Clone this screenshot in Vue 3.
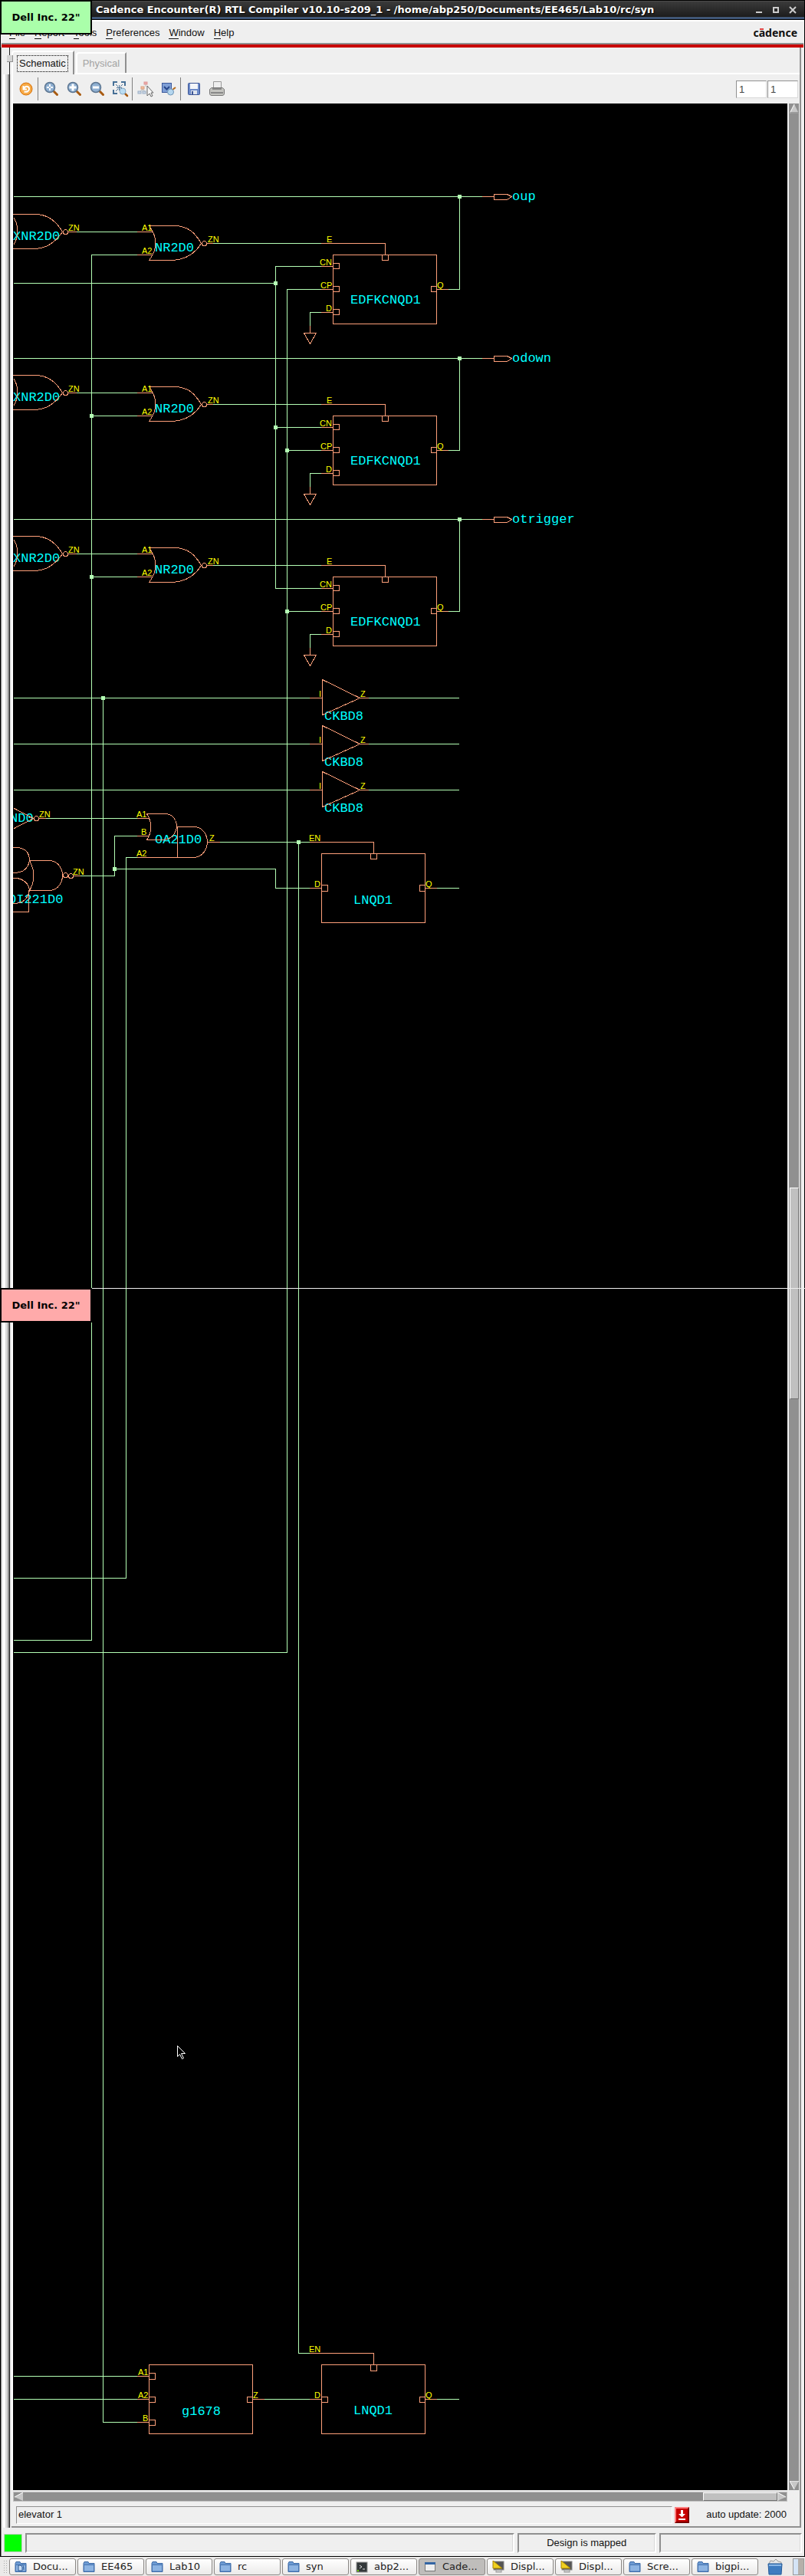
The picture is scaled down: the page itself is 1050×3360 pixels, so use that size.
<script setup>
import { ref } from 'vue'

const menus = ['File', 'Report', 'Tools', 'Preferences', 'Window', 'Help']
const zoomX = ref('1')
const zoomY = ref('1')

const tools = [
  { name: 'Redraw', icon: 'undo' },
  { sep: true },
  { name: 'Zoom area', icon: 'area' },
  { name: 'Zoom in', icon: 'in' },
  { name: 'Zoom out', icon: 'out' },
  { name: 'Zoom fit', icon: 'fit' },
  { sep: true },
  { name: 'Hierarchy', icon: 'tree' },
  { name: 'Inspect', icon: 'inspect' },
  { sep: true },
  { name: 'Save', icon: 'save' },
  { name: 'Print', icon: 'print' },
]

const tasks = [
  { label: 'Docu...', icon: 'docs' },
  { label: 'EE465', icon: 'folder' },
  { label: 'Lab10', icon: 'folder' },
  { label: 'rc', icon: 'folder' },
  { label: 'syn', icon: 'folder' },
  { label: 'abp2...', icon: 'term' },
  { label: 'Cade...', icon: 'app', active: true },
  { label: 'Displ...', icon: 'display' },
  { label: 'Displ...', icon: 'display' },
  { label: 'Scre...', icon: 'folder' },
  { label: 'bigpi...', icon: 'folder' },
]

// One register row per output port; dy shifts the row, net is its feedback wire.
const rows = [
  { dy: 0, net: 256, port: 'oup' },
  { dy: 210, net: 467, port: 'odown' },
  { dy: 420, net: 677, port: 'otrigger' },
]
const pins = [347, 377, 407]
const buffers = [910, 970, 1030]

const wires = [
  'M359 767V347', 'M18 369H359', 'M119 2139V332', 'M374 377V2155H18', 'M119 2139H18',
  'M359 557H419', 'M359 767H419', 'M374 587H419', 'M374 797H419', 'M359 347H419', 'M374 377H419',
  'M134 910V3159H179', 'M164 2058V1118H179', 'M164 2058H18',
  'M59 1067H179', 'M104 1142H149V1090H179', 'M149 1133H359V1158H404',
  'M286 1098H404', 'M389 1098V3069H404', 'M569 1158H598',
  'M18 3099H179', 'M18 3129H179', 'M344 3129H404', 'M569 3129H598',
]
const nodes = [
  [359, 369], [359, 557], [119, 542], [119, 752], [374, 587], [374, 797],
  [599, 256], [599, 467], [599, 677], [134, 910], [389, 1098], [149, 1133],
]
const pinLabels = [
  ['ZN', 51, 1066], ['A1', 178, 1066], ['B', 184, 1089], ['A2', 178, 1117], ['Z', 273, 1097],
  ['ZN', 95, 1141], ['EN', 403, 1097], ['D', 410, 1157], ['Q', 555, 1157],
  ['A1', 180, 3098], ['A2', 180, 3128], ['B', 186, 3158], ['Z', 330, 3128],
  ['EN', 403, 3068], ['D', 410, 3128], ['Q', 555, 3128],
]
const cellLabels = [
  ['ND0', 13, 1072], ['OA21D0', 202, 1100], ['OI221D0', 11, 1178],
  ['LNQD1', 461, 1179], ['g1678', 237, 3150], ['LNQD1', 461, 3149],
]
</script>

<template>
  <div class="screen">
    <header class="titlebar">
      <h1>Cadence Encounter(R) RTL Compiler v10.10-s209_1 - /home/abp250/Documents/EE465/Lab10/rc/syn</h1>
      <div class="winbtns">
        <button aria-label="Minimize"><svg width="10" height="10"><path d="M1 8H9" stroke="#ccc" stroke-width="2" /></svg></button>
        <button aria-label="Maximize"><svg width="10" height="10"><path d="M2 2H8V8H2Z" fill="none" stroke="#ccc" stroke-width="2" /></svg></button>
        <button aria-label="Close"><svg width="10" height="10"><path d="M1 1L9 9M9 1L1 9" stroke="#ccc" stroke-width="2" /></svg></button>
      </div>
    </header>

    <div class="window">
      <nav class="menubar">
        <a v-for="m in menus" :key="m" href="#"><span class="key">{{ m[0] }}</span>{{ m.slice(1) }}</a>
        <span class="logo">c<span class="bar">a</span>dence</span>
      </nav>

      <div class="body">
        <div class="sash"><div class="sash-top"><i class="handle"></i></div></div>
        <main class="pane">
          <div class="tabs">
            <button class="tab on"><span>Schematic</span></button>
            <button class="tab" disabled><span>Physical</span></button>
          </div>

          <div class="toolbar">
            <template v-for="(t, i) in tools" :key="i">
              <i v-if="t.sep" class="sep"></i>
              <button v-else class="tool" :aria-label="t.name">
                <svg width="22" height="22" viewBox="0 0 22 22">
                  <template v-if="t.icon === 'undo'">
                    <circle cx="11" cy="11" r="8" fill="#f7a945" stroke="#d8740e" />
                    <path d="M7.500 7V11.500H12M8 11C10 6 15 7.500 15 11C15 14 12 15.500 8.500 14.500" fill="none" stroke="#fff" stroke-width="2" />
                  </template>
                  <template v-else-if="t.icon === 'area' || t.icon === 'in' || t.icon === 'out'">
                    <path d="M13 13L18.500 18.500" stroke="#a85a10" stroke-width="3" stroke-linecap="round" />
                    <circle cx="9" cy="9" r="6.500" fill="#8fb0d2" stroke="#5c7590" stroke-width="1.500" />
                    <path v-if="t.icon === 'out'" d="M5 9H13" stroke="#fff" stroke-width="3" />
                    <path v-else-if="t.icon === 'in'" d="M4.500 9H13.500M9 4.500V13.500" stroke="#fff" stroke-width="3" />
                    <path v-else d="M5 9H13M9 5V13" stroke="#fff" stroke-width="2" stroke-dasharray="3 2" />
                  </template>
                  <template v-else-if="t.icon === 'fit'">
                    <path d="M2 7V2H7M12 2H17V7M2 12V17H7" fill="none" stroke="#466f96" stroke-width="2" />
                    <path d="M5 5L8 8M14 5L11 8M5 14L8 11M9.500 6V13M6 9.500H13" stroke="#466f96" />
                    <path d="M16 16L20 20" stroke="#a85a10" stroke-width="2.500" stroke-linecap="round" />
                    <circle cx="14" cy="14" r="4" fill="#b9dcf2" stroke="#88a9c4" />
                  </template>
                  <template v-else-if="t.icon === 'tree'">
                    <path d="M11 5V8M7 10V14M7 11L4 14M7 11L10 14" stroke="#bbb" fill="none" />
                    <rect x="9" y="2" width="4" height="3" fill="#eda6a6" stroke="#d99" />
                    <rect x="5" y="8" width="4" height="3" fill="#f2bfa0" stroke="#dba080" />
                    <rect x="1" y="14" width="4" height="3" fill="#c9d6e6" stroke="#9db0c5" />
                    <rect x="7" y="14" width="4" height="3" fill="#c9d6e6" stroke="#9db0c5" />
                    <path d="M13 7V20L16 17L18 21L20 20L18 16H21Z" fill="#f6f6f6" stroke="#666" />
                  </template>
                  <template v-else-if="t.icon === 'inspect'">
                    <rect x="2.500" y="3.500" width="12" height="12" fill="#7f9fd6" stroke="#3d5a9c" />
                    <path d="M5 8L8.500 11.500L12 8" fill="none" stroke="#27478b" stroke-width="2" />
                    <path d="M16 12L20 9" stroke="#b56a1a" stroke-width="2" />
                    <circle cx="13.500" cy="15" r="4" fill="#b4d6ef" stroke="#6f94b6" />
                  </template>
                  <template v-else-if="t.icon === 'save'">
                    <rect x="3.500" y="3.500" width="15" height="15" rx="1" fill="#6d8bc9" stroke="#3d5696" />
                    <rect x="6" y="4" width="10" height="7" fill="#f4f6fa" />
                    <rect x="7" y="13" width="8" height="5" fill="#dfe4ee" />
                    <rect x="8" y="14" width="2" height="4" fill="#3d5696" />
                  </template>
                  <template v-else>
                    <path d="M6.500 11V1.500H16.500V11" fill="#eee" stroke="#999" />
                    <path d="M1.500 11.500L4 9.500H18L20.500 11.500V17.500Q20 19.500 18 19.500H4Q2 19.500 1.500 17.500Z" fill="#c4c4c0" stroke="#777" />
                    <path d="M5 11H17M3 16H19" stroke="#888" stroke-width="2" />
                  </template>
                </svg>
              </button>
            </template>
            <div class="levels">
              <input v-model="zoomX" aria-label="From level" />
              <input v-model="zoomY" aria-label="To level" />
            </div>
          </div>

          <div class="view">
            <svg class="schematic" width="100%" height="3113">
              <g transform="translate(-17 -135)">
                <g class="cell-text">
                  <g v-for="r in rows" :key="r.port">
                    <text x="17" :y="313 + r.dy">XNR2D0</text>
                    <text x="202" :y="328 + r.dy">NR2D0</text>
                    <text x="457" :y="396 + r.dy">EDFKCNQD1</text>
                    <text x="668" :y="r.net + 5">{{ r.port }}</text>
                  </g>
                  <text v-for="y in buffers" :key="y" x="423" :y="y + 29">CKBD8</text>
                  <text v-for="(l, i) in cellLabels" :key="i" :x="l[1]" :y="l[2]">{{ l[0] }}</text>
                </g>
              </g>
              <g transform="translate(-16.500 -134.500)">
                <g class="wire">
                  <path v-for="d in wires" :key="d" :d="d" />
                  <g v-for="r in rows" :key="r.port">
                    <path :d="`M18 ${r.net}H629M599 ${r.net}V${377 + r.dy}H584`" />
                    <path :d="`M99 ${302 + r.dy}H179M119 ${332 + r.dy}H179M277 ${317 + r.dy}H419M419 ${407 + r.dy}H404V${425 + r.dy}`" />
                  </g>
                  <path v-for="y in buffers" :key="y" :d="`M18 ${y}H404M480 ${y}H598`" />
                </g>
                <g class="shape">
                  <g v-for="r in rows" :key="r.port">
                    <path :d="`M629 ${r.net}H644M644 ${r.net - 3}H661L667 ${r.net}L661 ${r.net + 4}H644Z`" />
                    <g :transform="`translate(0 ${r.dy})`">
                      <path d="M17 279H48C62 280 73 288 81 302C71 316 60 324 43 324H17M18 284Q27 301 18 318" />
                      <circle cx="85" cy="302" r="3" />
                      <path d="M89 302H99M179 302H199M179 332H198" />
                      <path d="M194 294H229C245 295 254 303 262 317C254 330 243 338 225 339H194Q211 317 194 294" />
                      <circle cx="266" cy="317" r="3" />
                      <path d="M270 317H277M419 317H502V332M434 332H569V422H434ZM498 332V339H506V332" />
                      <path v-for="p in pins" :key="p" :d="`M419 ${p}H434M434 ${p - 4}H442V${p + 3}H434`" />
                      <path d="M569 373H562V380H569M569 377H584M404 425V434M396 434H412L404 448Z" />
                    </g>
                  </g>
                  <path v-for="y in buffers" :key="y" :d="`M404 ${y}H420M420 ${y - 24}V${y + 22}L469 ${y}ZM469 ${y}H480`" />
                  <path d="M18 1054L43 1067L18 1080M51 1067H59M179 1067H194" />
                  <circle cx="47" cy="1067" r="3" />
                  <path d="M191 1061H217C226 1063 230 1070 230 1078C229 1087 223 1094 213 1095H191Q202 1078 191 1061M179 1090H194" />
                  <path d="M231 1078H255C275 1082 275 1114 254 1118H179M231 1078V1118M270 1098H286" />
                  <path d="M38 1122H66C86 1126 86 1157 66 1161H38Q49 1142 38 1122" />
                  <path d="M17 1105H24C34 1107 38 1114 38 1122C36 1132 31 1138 17 1138M17 1145H22C32 1147 37 1153 38 1161C36 1172 30 1178 17 1178M37 1161V1189H17" />
                  <circle cx="85" cy="1141" r="3" />
                  <circle cx="92" cy="1142" r="3" />
                  <path d="M95 1142H104" />
                  <path d="M404 1098H487V1113M404 1158H419M554 1158H569M419 1113H554V1203H419ZM483 1113V1120H491V1113M419 1154H427V1162H419M554 1154H547V1162H554" />
                  <path d="M404 3069H487V3084M404 3129H419M554 3129H569M419 3084H554V3174H419ZM483 3084V3092H491V3084M419 3126H427V3133H419M554 3126H547V3133H554" />
                  <path d="M194 3084H329V3174H194ZM179 3099H194M179 3129H194M179 3159H194M194 3095H202V3103H194M194 3126H202V3133H194M194 3156H202V3163H194M329 3126H322V3133H329M329 3129H344" />
                </g>
                <path class="cursor" d="M231 2668V2682L234 2679L237 2685L239 2684L236 2678H241Z" />
              </g>
              <g transform="translate(-17 -135)">
                <rect v-for="n in nodes" :key="n.join()" class="node" :x="n[0] - 2" :y="n[1] - 2" width="5" height="5" />
                <g class="pin-text">
                  <g v-for="r in rows" :key="r.port" :transform="`translate(0 ${r.dy})`">
                    <text x="89" y="301">ZN</text>
                    <text x="185" y="301">A1</text>
                    <text x="185" y="331">A2</text>
                    <text x="271" y="316">ZN</text>
                    <text x="426" y="316">E</text>
                    <text x="417" y="346">CN</text>
                    <text x="418" y="376">CP</text>
                    <text x="425" y="406">D</text>
                    <text x="570" y="376">Q</text>
                  </g>
                  <g v-for="y in buffers" :key="y">
                    <text x="416" :y="y - 1">I</text>
                    <text x="470" :y="y - 1">Z</text>
                  </g>
                  <text v-for="(l, i) in pinLabels" :key="i" :x="l[1]" :y="l[2]">{{ l[0] }}</text>
                </g>
              </g>
            </svg>
            <div class="vscroll">
              <svg width="12" height="13"><path d="M0 13L6 1L12 13Z" fill="#c8c8c8" /><path d="M0 13L6 1" stroke="#fff" /><path d="M0 12H12" stroke="#707070" /></svg>
              <i class="before"></i>
              <i class="thumb"></i>
              <i class="after"></i>
              <svg width="12" height="12"><path d="M0 0L6 11L12 0Z" fill="#c8c8c8" /><path d="M6 11L0 0H12" fill="none" stroke="#fff" /></svg>
            </div>
          </div>

          <div class="hscroll">
            <svg width="12" height="11"><path d="M12 0L1 6L12 11Z" fill="#c8c8c8" /><path d="M1 6L12 0" stroke="#fff" /></svg>
            <i class="rail"></i>
            <i class="thumb"></i>
            <svg width="12" height="11"><path d="M0 0L11 6L0 11Z" fill="#c8c8c8" /><path d="M0 11V0L11 6" fill="none" stroke="#fff" /></svg>
          </div>

          <div class="info">
            <div class="design">elevator 1</div>
            <button class="load" aria-label="Load update">
              <svg width="13" height="15"><path d="M5 1H8V6H11L7 10H6L2 6H5ZM2 12H11V14H2Z" fill="#fff" /></svg>
            </button>
            <span class="auto">auto update: 2000</span>
          </div>
        </main>
      </div>

      <footer class="status">
        <i class="lamp"></i>
        <div class="panel wide"></div>
        <div class="panel mid">Design is mapped</div>
        <div class="panel last"></div>
      </footer>
    </div>

    <div class="taskbar">
      <i class="grip"></i>
      <button v-for="(t, i) in tasks" :key="i" class="task" :class="{ active: t.active }">
        <svg width="16" height="16" viewBox="0 0 16 16">
          <template v-if="t.icon === 'folder' || t.icon === 'docs'">
            <path d="M1 3.500L2 1.500H7L8 3.500H15V14.500H1Z" fill="#6d9bd3" stroke="#3c6aa6" />
            <path d="M1.500 5.500H14.500V14H1.500Z" fill="#8db4e2" stroke="#4775b2" />
            <path v-if="t.icon === 'docs'" d="M5 6H8L10 8V13H5ZM10 5Q12 6 12 12" fill="#c8dcf3" stroke="#285692" />
          </template>
          <template v-else-if="t.icon === 'term'">
            <rect x="1" y="2" width="14" height="13" fill="#33383a" stroke="#999" />
            <path d="M5 6L8 8L5 10M9 11H12" fill="none" stroke="#ddd" />
            <rect x="2" y="12" width="2" height="2" fill="#6c0" />
          </template>
          <template v-else-if="t.icon === 'app'">
            <rect x="1.500" y="2.500" width="13" height="11" fill="#eee" stroke="#777" />
            <rect x="1" y="2" width="14" height="3" fill="#3465a4" />
          </template>
          <template v-else>
            <rect x="2" y="1" width="13" height="11" fill="#555" stroke="#888" />
            <rect x="5" y="12" width="7" height="3" fill="#ccc" stroke="#999" />
            <path d="M1 0V10H13Z" fill="#f0d020" stroke="#a88400" />
          </template>
        </svg>
        <span>{{ t.label }}</span>
      </button>
      <button class="trash" aria-label="Trash">
        <svg width="20" height="22" viewBox="0 0 20 22">
          <path d="M2 7L4 3L8 4L11 1L14 4L18 5V8H2Z" fill="#e8e8e8" stroke="#999" />
          <path d="M1 7H19L18 21H2Z" fill="#3f7cc0" stroke="#245a98" />
          <path d="M2 9H18" stroke="#8ab7e6" stroke-width="2" />
        </svg>
      </button>
      <i class="pager"></i>
    </div>

    <div class="monitor-edge"></div>
    <div class="badge first">Dell Inc. 22"</div>
    <div class="badge second">Dell Inc. 22"</div>
  </div>
</template>

<style>
body { margin: 0; background: #000; }
</style>

<style scoped>
* { box-sizing: border-box; }
button, input { font: inherit; margin: 0; padding: 0; border: 0; background: none; color: inherit; border-radius: 0; }
svg { display: block; flex: none; }
i { flex: none; }
.screen { position: relative; font: 13px/16px "Liberation Sans", Arial, sans-serif; color: #111; overflow: hidden; }

.titlebar { display: flex; align-items: center; height: 26px; padding: 0 10px 0 125px; border: solid #000; border-width: 1px 1px 1px 0;
  background: linear-gradient(#5c5a59 0, #3a3a3a 1px, #303030 8px, #1c1c1c 21px, #5a7aa8 22px, #24354e 24px); }
.titlebar h1 { flex: 1; margin: 0; font: bold 13px/24px "DejaVu Sans", sans-serif; color: #fff; white-space: nowrap; text-shadow: 1px 1px 1px #000; }
.winbtns { display: flex; gap: 12px; }

.window { background: #efefef; border: solid #000; border-width: 0 1px 1px 1px; }
.menubar { display: flex; align-items: center; height: 36px; padding: 0 8px 0 10px; gap: 12px; border-top: 2px solid #fff; border-bottom: 4px solid #c80000;
  margin: 0 1px; box-shadow: inset 0 -2px #909090; }
.menubar a { color: #111; text-decoration: none; }
.key { border-bottom: 1px solid #111; }
.logo { margin-left: auto; font: bold 14px/20px "Noto Sans", sans-serif; }
.bar { position: relative; }
.bar::before { content: ""; position: absolute; left: 1px; top: 4px; width: 5px; height: 2px; background: #e04040; }

.body { display: flex; }
.sash { width: 14px; background: linear-gradient(90deg, #808080 1px, #efefef 1px 3px, #fff 3px 6px, #d9d9d9 6px 9px, #909090 9px 11px, #222 11px 12px, #ddd 12px 13px, #efefef 13px); }
.sash-top { position: relative; height: 35px; background: linear-gradient(90deg, #808080 1px, #efefef 1px 11px, #222 11px 12px, #efefef 12px); }
.handle { position: absolute; left: 8px; top: 10px; width: 8px; height: 9px; background: #d4d4d4; border: 1px solid #909090; border-width: 0 1px 1px 0; }
.pane { flex: 1; min-width: 0; margin-right: 4px; border-right: 2px solid #909090; border-bottom: 2px solid #909090; }

.tabs { display: flex; align-items: flex-end; height: 35px; padding-top: 4px; border-bottom: 2px solid #fff; }
.tab { height: 27px; padding: 0 7px; border: solid #fff; border-width: 2px 2px 0; border-right-color: #909090; border-radius: 4px 0 0; color: #a3a3a3; margin-left: 2px; white-space: nowrap; }
.tab.on { height: 31px; margin: 0 0 -2px; padding: 0 6px 0 5px; color: #111; background: #efefef; }
.tab.on span { display: block; padding: 2px 2px; border: 1px dotted #000; }

.toolbar { display: flex; align-items: center; height: 38px; padding: 0 2px 0 4px; border-left: 0; box-shadow: inset 2px 0 #fff; }
.tool { width: 30px; height: 30px; display: flex; align-items: center; justify-content: center; }
.sep { width: 3px; height: 30px; border-left: 1px solid #808080; }
.levels { margin-left: auto; display: flex; gap: 1px; }
.levels input { width: 40px; height: 23px; padding: 0 3px; background: #fff; border: 1px solid #909090; border-right-color: #d9d9d9; border-bottom-color: #d9d9d9; color: #444; }

.view { display: flex; border-left: 2px solid #fff; }
.schematic { flex: 1; width: 0; min-width: 0; background: #000; overflow: hidden; }
.vscroll { display: flex; flex-direction: column; align-items: center; width: 13px; margin: 0 1px 0 2px; background: #909090; }
.before { flex: 1401 0 0; }
.vscroll .thumb { flex: 275 0 0; width: 12px; }
.after { flex: 1411 0 0; }
.thumb { background: #c0c0c0; border: 1px solid #fff; border-right-color: #707070; border-bottom-color: #707070; }
.hscroll { display: flex; align-items: center; height: 13px; margin: 2px 16px 0 2px; background: #909090; border: 1px solid #c4c4c4; }
.rail { flex: 889 0 0; }
.hscroll .thumb { flex: 95 0 0; height: 11px; }

.wire path { fill: none; stroke: #b4ffb4; stroke-linecap: square; shape-rendering: crispEdges; }
.node { fill: #b4ffb4; }
.shape path, .shape circle { fill: none; stroke: #ffa07a; stroke-linecap: square; shape-rendering: crispEdges; }
.cell-text { font: 17px "Liberation Mono", "Courier New", monospace; fill: #0ff; }
.pin-text { font: 11px "Liberation Sans", Arial, sans-serif; fill: #ff0; }
.cursor { fill: #000; stroke: #fff; }

.info { display: flex; align-items: center; height: 32px; padding: 2px 17px 0 6px; }
.design { flex: 1; height: 23px; padding: 2px; border: 1px solid #909090; border-right-color: #fff; border-bottom-color: #fff; }
.load { width: 19px; height: 21px; margin: 0 22px 0 3px; padding: 1px; background: #c80000; border: 2px solid #ff7f7f; border-right-color: #700; border-bottom-color: #700; }

.status { display: flex; align-items: center; height: 37px; padding: 2px 3px 0 4px; border-left: 1px solid #808080; }
.lamp { width: 22px; height: 22px; margin-right: 5px; background: #0f0; box-shadow: 0 0 0 1px #ccc; }
.panel { height: 26px; border: 2px solid #909090; border-right-color: #fff; border-bottom-color: #fff; text-align: center; line-height: 22px; box-shadow: inset -1px -1px #d9d9d9; }
.wide { flex: 633 0 0; }
.mid { flex: 177 0 0; margin: 0 4px; }
.last { flex: 182 0 0; }

.taskbar { display: flex; align-items: center; height: 25px; gap: 2px; padding: 0 1px 0 4px; background: #ebeae9; }
.grip { width: 6px; height: 17px; background: radial-gradient(#aaa 1px, transparent 1px) 0 0 / 3px 3px; }
.task { display: flex; align-items: center; width: 87px; height: 22px; padding: 0 6px; gap: 8px; border: 1px solid #8c8986; border-radius: 3px; background: linear-gradient(#fff, #ebeae9); font: 13px/20px "DejaVu Sans", sans-serif; color: #222; white-space: nowrap; flex: none; }
.task.active { background: #bfbdbb; }
.trash { margin-left: 10px; }
.pager { width: 15px; height: 22px; margin-left: auto; border: 1px solid #999; background: linear-gradient(90deg, #d5e4f7 6px, #b5b0aa 6px); }

.monitor-edge { position: absolute; top: 1680px; left: 120px; right: 0; height: 1px; background: #eee; }
.badge { position: absolute; left: 0; width: 120px; height: 45px; border: 2px solid #000; font: bold 13px/41px "DejaVu Sans", sans-serif; text-align: center; color: #000; }
.first { top: 0; background: #aaffaa; }
.second { top: 1680px; background: #ffaaaa; }
</style>
